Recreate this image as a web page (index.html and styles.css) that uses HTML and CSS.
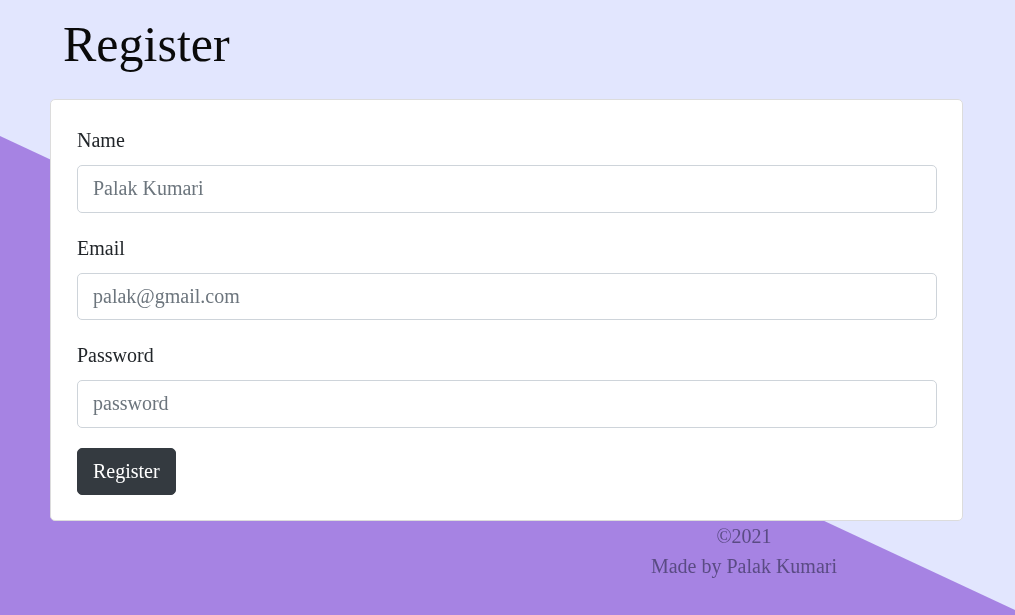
FILE: index.html
```html
<!DOCTYPE html>
<html lang="en">
<head>
<meta charset="utf-8">
<title>Register</title>
<link rel="stylesheet" href="styles.css">
</head>
<body>
<div class="bg-shape"></div>
<main class="page">
  <h1 class="title">Register</h1>
  <div class="card">
    <form class="form">
      <div class="group">
        <label class="label">Name</label>
        <input class="control" type="text" placeholder="Palak Kumari">
      </div>
      <div class="group">
        <label class="label">Email</label>
        <input class="control" type="email" placeholder="palak@gmail.com">
      </div>
      <div class="group">
        <label class="label">Password</label>
        <input class="control" type="password" placeholder="password">
      </div>
      <button class="btn" type="button">Register</button>
    </form>
  </div>
  <footer class="footer">
    <div>©2021</div>
    <div>Made by Palak Kumari</div>
  </footer>
</main>
</body>
</html>
```

FILE: styles.css
```css
html, body {
  margin: 0;
  padding: 0;
  height: 100%;
}
body {
  background: #e2e6fe;
  font-family: "Liberation Serif", "Times New Roman", serif;
  font-size: 20px;
  line-height: 1.5;
  color: #212529;
  overflow: hidden;
}
.bg-shape {
  position: fixed;
  inset: 0;
  background: #a683e3;
  clip-path: polygon(0 136px, 1015px 610px, 1015px 615px, 0 615px);
  z-index: 0;
}
.page {
  position: relative;
  z-index: 1;
  padding-left: 50px;
  width: 913px;
}
.title {
  margin: 0 0 25px 13px;
  padding-top: 14px;
  font-size: 50px;
  font-weight: 400;
  line-height: 1.2;
  color: #0a0a0a;
}
.card {
  background: #fff;
  border: 1px solid #dcdcdc;
  border-radius: 5px;
  padding: 25px 25px 25px 26px;
}
.group {
  margin-bottom: 20px;
}
.label {
  display: block;
  margin-bottom: 10px;
  line-height: 30px;
}
.control {
  display: block;
  box-sizing: border-box;
  width: 100%;
  height: 47.5px;
  padding: 7.5px 15px;
  font-family: inherit;
  font-size: 20px;
  line-height: 1.5;
  color: #495057;
  background: #fff;
  border: 1px solid #ced4da;
  border-radius: 5px;
  outline: none;
}
.control::placeholder {
  color: #6c757d;
  opacity: 1;
}
.btn {
  display: block;
  height: 47.5px;
  padding: 7.5px 15px;
  font-family: inherit;
  font-size: 20px;
  line-height: 1.5;
  color: #fff;
  background: #343a40;
  border: 1px solid #343a40;
  border-radius: 5px;
}
.footer {
  margin-left: 594px;
  width: 200px;
  text-align: center;
  color: #5a4b84;
  line-height: 30px;
}
```
